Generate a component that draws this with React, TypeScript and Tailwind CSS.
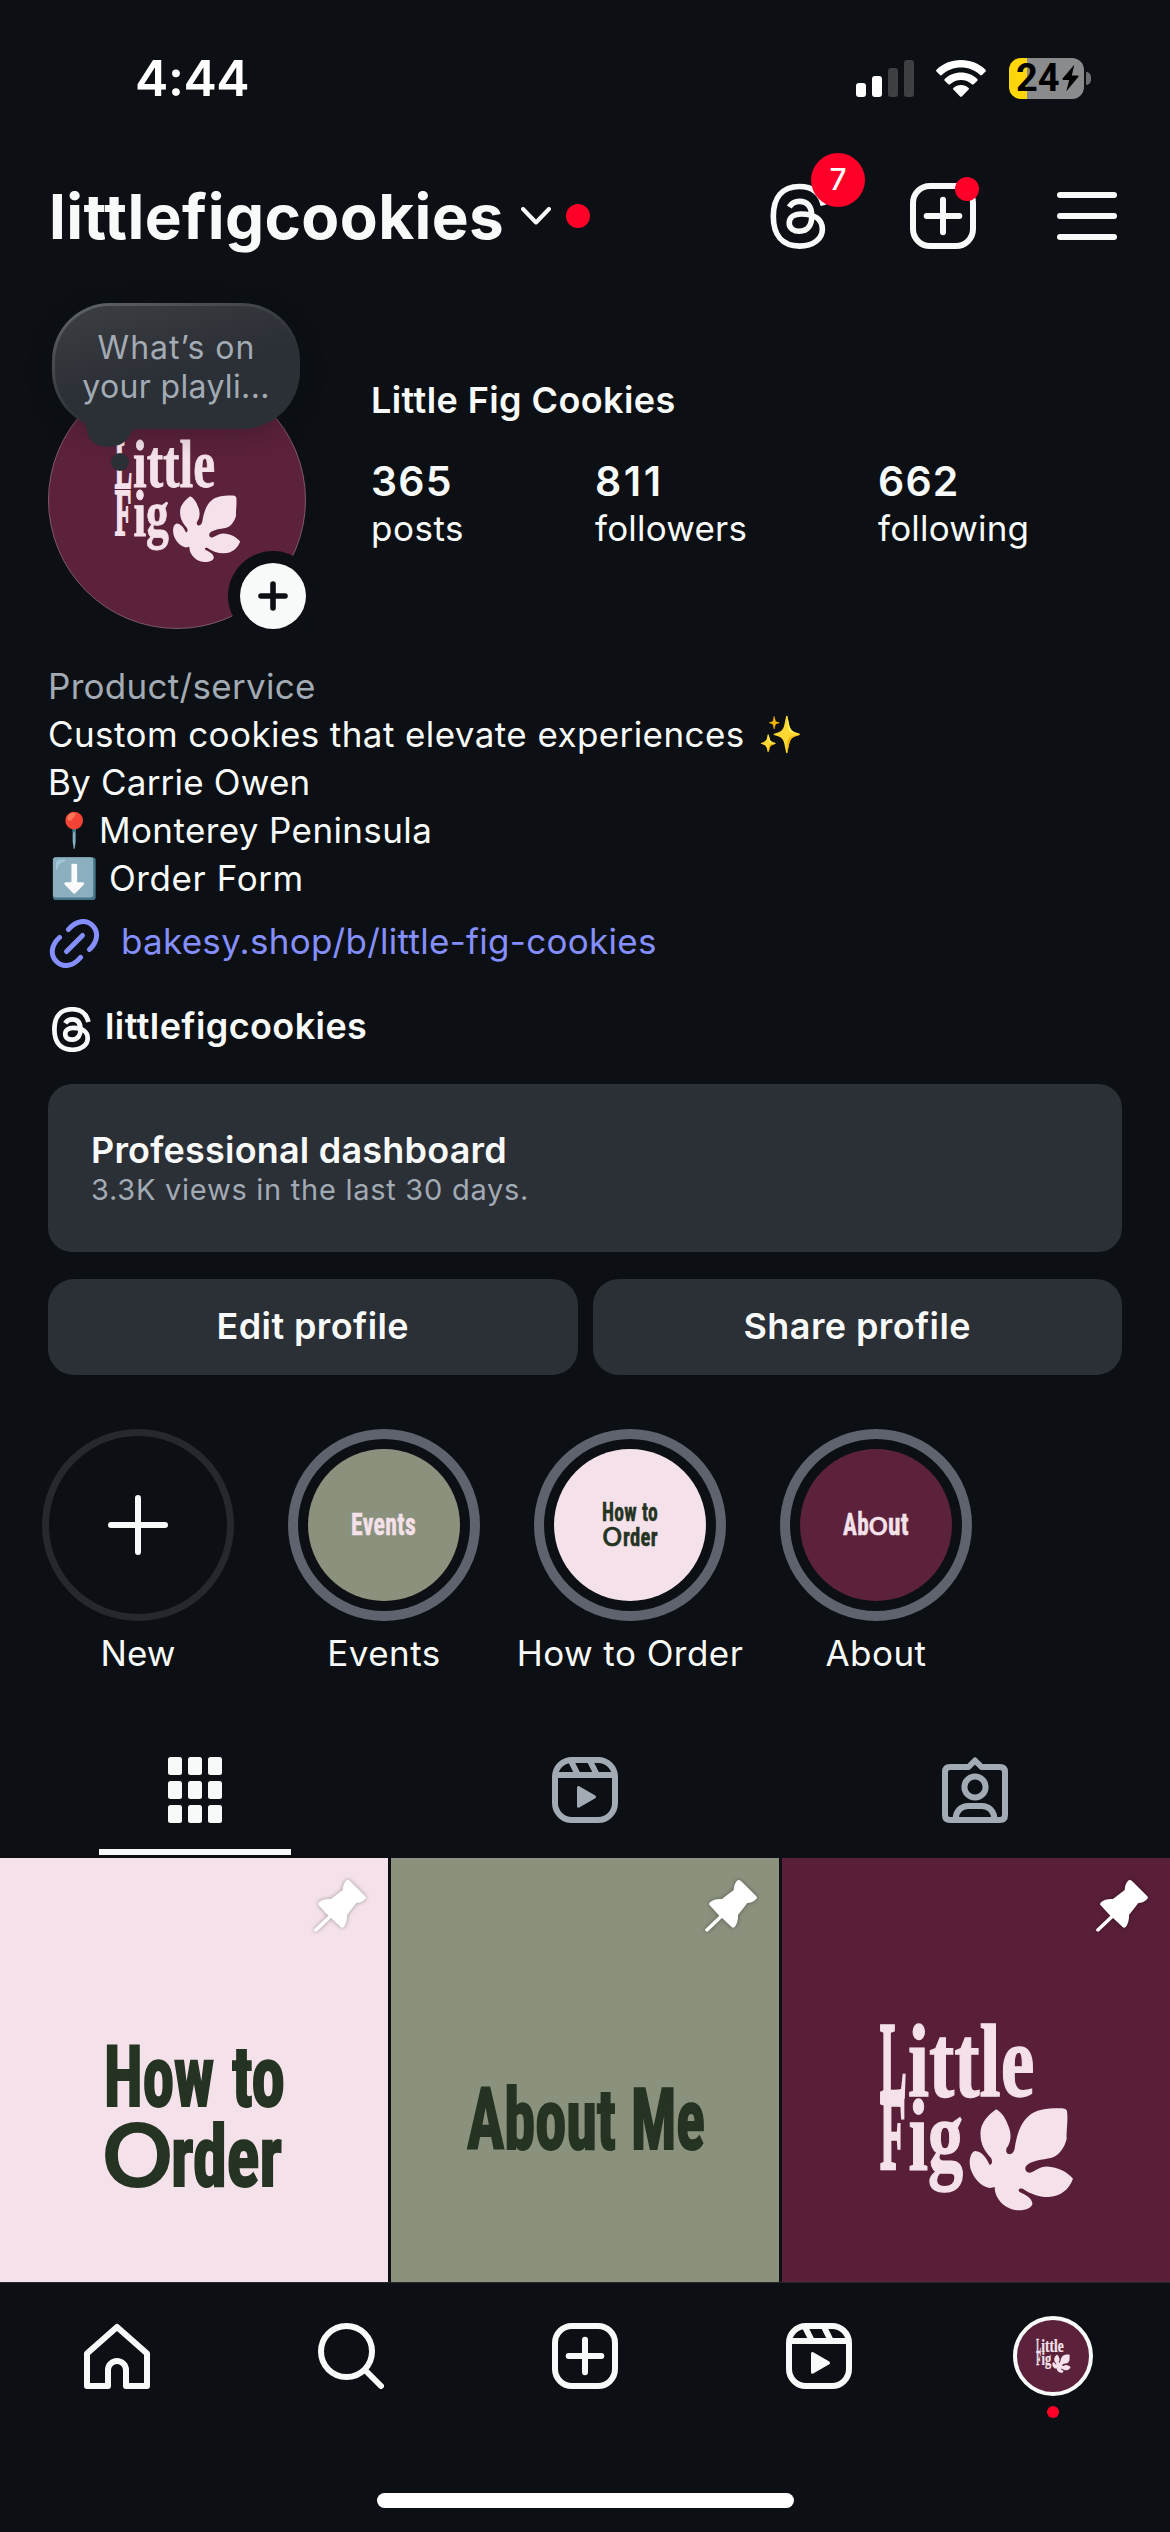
import type { ReactNode } from 'react';

interface IconProps {
  className?: string;
}

interface ArtTextProps {
  x: number;
  y: number;
  size: number;
  width?: number;
  className?: string;
  children: ReactNode;
}

const condensed = "font-['Roboto',sans-serif] font-bold [font-stretch:75%]";

// Lettering stretched to an exact width
const ArtText = ({ x, y, size, width, className = '', children }: ArtTextProps) => (
  <text x={x} y={y} fontSize={size} textLength={width} lengthAdjust="spacingAndGlyphs" className={className}>
    {children}
  </text>
);

const ThreadsIcon = ({ className = '', weight = 17 }: IconProps & { weight?: number }) => (
  <svg viewBox="26 113 172 200" fill="none" stroke="currentColor" strokeWidth={weight} className={className}>
    <path d="M187 180C178 141 152 123 115 123C62 123 36 158 36 213C36 268 62 303 115 303C158 303 184 280 184 252C184 222 160 206 120 206C98 206 84 217 84 233C84 250 98 258 115 258C140 258 152 240 152 213C152 185 140 168 115 168C100 168 91 174 84 185" />
  </svg>
);

const CreateIcon = ({ className = '' }: IconProps) => (
  <svg viewBox="0 0 66 66" fill="none" stroke="currentColor" strokeWidth="6" strokeLinecap="round" className={className}>
    <rect x="3" y="3" width="60" height="60" rx="17" />
    <path d="M33 16.7V49.3M16.7 33H49.3" />
  </svg>
);

const MenuIcon = ({ className = '' }: IconProps) => (
  <svg viewBox="0 0 60 48" fill="none" stroke="currentColor" strokeWidth="6" strokeLinecap="round" className={className}>
    <path d="M3 3H57M3 24H57M3 45H57" />
  </svg>
);

const GridIcon = ({ className = '' }: IconProps) => (
  <svg viewBox="0 0 54 66" fill="currentColor" className={className}>
    {[0, 24, 48].map((y) => [0, 20, 40].map((x) => <rect key={`${x}-${y}`} x={x} y={y} width="14" height="18" rx="2.5" />))}
  </svg>
);

const ReelsIcon = ({ className = '' }: IconProps) => (
  <svg viewBox="0 0 66 66" fill="none" stroke="currentColor" strokeWidth="6" className={className}>
    <rect x="3" y="3" width="60" height="60" rx="17" />
    <path d="M3 18H63M18.5 3L26 18M37.5 3L45 18" />
    <path d="M26.5 30.5V49.2L42.5 39.9Z" fill="currentColor" strokeWidth="3" strokeLinejoin="round" />
  </svg>
);

const TaggedIcon = ({ className = '' }: IconProps) => (
  <svg viewBox="0 0 66 66" fill="none" stroke="currentColor" strokeWidth="6" strokeLinejoin="round" className={className}>
    <path d="M8 10H26.5L33 3.5L39.5 10H58Q63 10 63 15V58Q63 63 58 63H8Q3 63 3 58V15Q3 10 8 10Z" />
    <circle cx="33" cy="30" r="10.6" />
    <path d="M13.7 62C13.7 54.5 19 49 26 49H40C47 49 52.3 54.5 52.3 62" />
  </svg>
);

const HomeIcon = ({ className = '' }: IconProps) => (
  <svg viewBox="0 0 66 66" fill="none" stroke="currentColor" strokeWidth="6" strokeLinejoin="round" className={className}>
    <path d="M3 30.5L33 4L63 30.5V63H42V47A9 9 0 0 0 24 47V63H3Z" />
  </svg>
);

const SearchIcon = ({ className = '' }: IconProps) => (
  <svg viewBox="0 0 66 66" fill="none" stroke="currentColor" strokeWidth="6" strokeLinecap="round" className={className}>
    <circle cx="28.5" cy="28.5" r="25.5" />
    <path d="M47 47L63 63" />
  </svg>
);

const LinkIcon = ({ className = '' }: IconProps) => (
  <svg viewBox="0 0 51 51" fill="none" stroke="currentColor" strokeWidth="5" strokeLinecap="round" className={className}>
    <path d="M19.5 11.5C27 2.5 37 1 43.5 7.5C50 14 48.5 24 40.5 31.5" />
    <path d="M10.5 19.5C2 27 1 37 7.5 43.5C14 50 24 48.5 31.5 39.5" />
    <path d="M17.5 33.5L33.5 17.5" />
  </svg>
);

const PinIcon = ({ className = '' }: IconProps) => (
  <svg viewBox="945 87 162 162" fill="white" className={className}>
    <path d="M1046 91Q1051 88 1056 93L1102 139Q1106 144 1101 148Q1091 159 1075 159L1047 195Q1048 217 1037 231Q1032 236 1028 231L999 204L958 243Q954 247 950 243Q946 240 950 236L991 197L962 166Q958 162 963 157Q974 146 999 147L1034 120Q1035 100 1046 91Z" />
  </svg>
);

const FigLogo = ({ className = '' }: IconProps) => (
  <svg
    viewBox="296 514 586 574"
    fill="#f4e1ea"
    stroke="#f4e1ea"
    className={`overflow-visible font-['Liberation_Serif',serif] font-bold ${className}`}
  >
    <ArtText x={299} y={741} size={324} width={80} className="stroke-[10px]">L</ArtText>
    <ArtText x={383} y={738} size={314} width={380} className="stroke-[4px]">ittle</ArtText>
    <ArtText x={299} y={959} size={316} width={77} className="stroke-[10px]">F</ArtText>
    <ArtText x={385} y={961} size={306} width={164} className="stroke-[4px]">ig</ArtText>
    <path
      stroke="none"
      d="M648 779C625 795 601 820 601 850C600 885 615 905 632 925C638 933 636 948 628 946C618 925 605 906 585 905C568 910 566 940 571 958C580 985 600 1010 628 1016Q640 1014 644 1013C642 1045 672 1080 712 1083C738 1084 757 1075 757 1062C755 1045 735 1036 718 1027C712 1021 718 1016 728 1018C750 1034 780 1044 805 1043C840 1042 868 1020 879 988C865 970 835 952 800 951C780 951 765 965 750 970C738 970 732 960 738 950C755 932 785 932 815 925C840 918 855 890 860 868C858 850 865 810 861 785C858 775 845 776 835 776C800 776 765 780 745 800C722 820 710 855 704 895C702 908 695 916 685 914C675 910 677 897 684 890C695 870 692 845 685 830C678 810 668 790 648 779Z"
    />
  </svg>
);

const StatusBar = () => (
  <div className="flex h-[156px] items-center pr-[79px] pl-[135px]">
    <span className="text-[50px] font-semibold tracking-[-0.4px] text-white">4:44</span>
    <div className="ml-auto flex items-center">
      <div className="flex h-[37px] items-end gap-1.5">
        <div className="h-[14px] w-2.5 rounded-[3px] bg-white" />
        <div className="h-[21px] w-2.5 rounded-[3px] bg-white" />
        <div className="h-[29px] w-2.5 rounded-[3px] bg-[#3d4043]" />
        <div className="h-[37px] w-2.5 rounded-[3px] bg-[#3d4043]" />
      </div>
      <svg viewBox="0 0 50 37" fill="white" className="ml-[22px] h-[37px] w-[50px]">
        <path d="M25 0C34.5 0 43.5 3.6 49.5 9.8q.8.9 0 1.7L46 15q-.9.8-1.8 0C38.9 10 32.3 7.4 25 7.4S11.1 10 5.8 15q-.9.8-1.8 0L.5 11.5q-.8-.8 0-1.7C6.5 3.6 15.5 0 25 0Z" />
        <path d="M25 12.5c6.3 0 12 2.4 16.3 6.4q.9.9 0 1.8l-3.6 3.5q-.9.8-1.8 0c-3-2.7-6.8-4.2-10.9-4.2s-7.9 1.5-10.9 4.2q-.9.8-1.8 0l-3.6-3.5q-.9-.9 0-1.8C13 14.9 18.7 12.5 25 12.5Z" />
        <path d="M25 25c2.9 0 5.6 1.1 7.6 2.9q.9.8 0 1.7L25.9 36.4q-.9.9-1.8 0L17.4 29.6q-.9-.9 0-1.7C19.4 26.1 22.1 25 25 25Z" />
      </svg>
      <div className="ml-[23px] flex h-[41px] w-[75px] items-center rounded-[12px] bg-[linear-gradient(90deg,#ffd60a_18px,#8a8b8d_18px)] pl-[7px] text-black">
        <span className="font-['Roboto'] text-[38px] leading-none font-bold">24</span>
        <svg viewBox="0 0 18 28" fill="currentColor" className="ml-0.5 h-7 w-[17px]">
          <path d="M13 0L.6 14.6Q0 16 1.3 16H7.6L4.6 28L17.4 12.8Q18 11.4 16.6 11.4H10.4Z" />
        </svg>
      </div>
      <div className="ml-0.5 h-[13px] w-[5px] rounded-r-full bg-[#6d6f72]" />
    </div>
  </div>
);

const Header = () => (
  <div className="flex h-[120px] items-center pr-[53px] pl-[49px]">
    <h1 className="mt-px text-[62px] leading-none font-bold tracking-[0.4px]">littlefigcookies</h1>
    <svg viewBox="0 0 30 18" fill="none" stroke="currentColor" strokeWidth="4" strokeLinecap="round" strokeLinejoin="round" className="ml-[17px] h-[18px] w-[30px]">
      <path d="M2 2L15 15.5L28 2" />
    </svg>
    <div className="ml-[15px] size-6 rounded-full bg-[#ff0029]" />
    <div className="ml-auto flex items-center">
      <div className="relative">
        <ThreadsIcon className="h-[66.6px] w-[57px]" />
        <div className="absolute -top-[30px] left-[41px] flex size-[54px] items-center justify-center rounded-full bg-[#ff0029] text-[30px] font-medium text-white">
          7
        </div>
      </div>
      <div className="relative ml-[83px]">
        <CreateIcon className="size-[66px]" />
        <div className="absolute -top-1.5 left-[45px] size-6 rounded-full bg-[#ff0029]" />
      </div>
      <MenuIcon className="ml-[81px] h-12 w-[60px]" />
    </div>
  </div>
);

const Avatar = () => (
  <div className="relative size-[258px] shrink-0 rounded-full border border-[#7d5a68] bg-[#5c213b]">
    <FigLogo className="absolute top-[67px] left-[65px] h-[124px] w-[127px]" />
    <div className="absolute -top-[69px] left-[3px] h-[126px] w-[248px] rounded-[58px] bg-[linear-gradient(160deg,#64676a_0%,#4b4e52_25%,#2b2f36_60%)] p-[3px] shadow-[0_6px_24px_rgba(12,16,20,0.25)]">
      <div className="h-full rounded-[55px] bg-[linear-gradient(165deg,#3b3e41_0%,#2b2f36_55%)] pt-[22px] text-center text-[32px] leading-[39px] text-[#a2aab4]">
        <div className="pl-px tracking-[1px]">What’s on</div>
        <div className="tracking-[0.35px]">your playli...</div>
      </div>
    </div>
    <svg viewBox="0 0 60 57" fill="#2b2f36" className="absolute top-[43px] left-[31px] h-[57px] w-[60px]">
      <path d="M0 0C6 8 6 12 7 16C9 27 17 32 28 32C41 32 48 25 51 18C52 14 56 14 60 14V0Z" />
      <circle cx="40" cy="47" r="9" />
    </svg>
    <div className="absolute top-[179px] left-[179px] flex size-[90px] items-center justify-center rounded-full bg-[#0c1014]">
      <div className="flex size-[66px] items-center justify-center rounded-full bg-[#f8faf9]">
        <svg viewBox="0 0 30 30" stroke="#0c1014" strokeWidth="5.6" strokeLinecap="round" className="size-[30px]">
          <path d="M15 3V27M3 15H27" />
        </svg>
      </div>
    </div>
  </div>
);

const stats = [
  { value: '365', label: 'posts', valueClass: 'tracking-[1.2px]', labelClass: 'tracking-[0.5px]' },
  { value: '811', label: 'followers', valueClass: 'tracking-[2.6px]', labelClass: 'tracking-[0.2px]' },
  { value: '662', label: 'following', valueClass: 'tracking-[1.2px]', labelClass: 'tracking-[0.2px]' },
];

const ProfileSummary = () => (
  <div className="mt-[95px] flex gap-[65px] px-12">
    <Avatar />
    <div className="pt-[5px]">
      <div className="text-[36px] leading-[48px] font-semibold tracking-[0.4px]">Little Fig Cookies</div>
      <div className="mt-[34px] grid grid-cols-[224px_283px_auto]">
        {stats.map((stat) => (
          <div key={stat.label}>
            <div className={`text-[41px] leading-[46px] font-semibold ${stat.valueClass}`}>{stat.value}</div>
            <div className={`text-[35px] leading-[48px] ${stat.labelClass}`}>{stat.label}</div>
          </div>
        ))}
      </div>
    </div>
  </div>
);

const Bio = () => (
  <div className="mt-[33px] px-12 text-[35px] leading-[48px] tracking-[0.41px]">
    <div className="h-12 tracking-[0.3px] text-[#a2aab4]">Product/service</div>
    <div className="flex h-12 items-center">
      Custom cookies that elevate experiences
      <span className="ml-[13px] text-[36px] tracking-normal">✨</span>
    </div>
    <div className="h-12 tracking-[0.2px]">By Carrie Owen</div>
    <div className="flex h-12 items-center tracking-[0.38px]">
      <span className="w-[51px] text-center text-[34px] tracking-normal">📍</span>
      Monterey Peninsula
    </div>
    <div className="flex h-12 items-center">
      <span className="mr-[9px] flex w-[52px] justify-center text-[39px] tracking-normal">⬇️</span>
      <span className="tracking-[0.6px]">Order Form</span>
    </div>
    <div className="mt-[15px] flex h-[52px] items-center pl-px text-[#858fff]">
      <LinkIcon className="size-[51px]" />
      <span className="-mt-1 ml-[21px] tracking-[0.28px]">bakesy.shop/b/little-fig-cookies</span>
    </div>
    <div className="mt-9 flex h-12 items-center pl-1">
      <ThreadsIcon className="h-[45px] w-[39px]" weight={21} />
      <span className="-mt-[6px] ml-[14px] text-[36px] font-semibold tracking-[0.4px]">littlefigcookies</span>
    </div>
  </div>
);

const Actions = () => (
  <div className="mt-[31px] px-12">
    <div className="h-[168px] rounded-[24px] bg-[#2b2f36] pt-[45px] pl-[43px]">
      <div className="text-[36px] leading-[43px] font-semibold tracking-[0.2px]">Professional dashboard</div>
      <div className="text-[29px] leading-[36px] tracking-[0.73px] text-[#a2aab4]">3.3K views in the last 30 days.</div>
    </div>
    <div className="mt-[27px] grid grid-cols-2 gap-[15px] text-[36px] font-semibold tracking-[0.4px]">
      <button className="h-24 rounded-[26px] bg-[#2b2f36] pb-[3px]">Edit profile</button>
      <button className="h-24 rounded-[26px] bg-[#2b2f36] pb-[3px]">Share profile</button>
    </div>
  </div>
);

const highlights = [
  {
    label: 'Events',
    cover: 'bg-[#8a917d]',
    art: (
      <g fill="#f4e1ea" stroke="#f4e1ea" strokeWidth="0.5" className={condensed}>
        <ArtText x={43} y={86} size={32} width={65}>Events</ArtText>
      </g>
    ),
  },
  {
    label: 'How to Order',
    cover: 'bg-[#f4e1ea]',
    art: (
      <g fill="#253322" stroke="#253322" strokeWidth="0.5" className={condensed}>
        <ArtText x={48} y={72} size={26} width={56}>How to</ArtText>
        <ArtText x={48} y={97} size={25} width={21} className="font-['Inter'] font-medium [font-stretch:100%]">O</ArtText>
        <ArtText x={69} y={97} size={26} width={35}>rder</ArtText>
      </g>
    ),
  },
  {
    label: 'About',
    cover: 'bg-[#5c213b]',
    art: (
      <g fill="#f4e1ea" stroke="#f4e1ea" strokeWidth="0.5" className={condensed}>
        <ArtText x={43} y={86} size={32} width={26}>Ab</ArtText>
        <ArtText x={68} y={86} size={32} width={21} className="font-['Inter'] font-normal [font-stretch:100%]">o</ArtText>
        <ArtText x={88} y={86} size={32} width={21}>ut</ArtText>
      </g>
    ),
  },
];

const Highlights = () => (
  <div className="mt-[54px] flex pl-[15px] text-[35px] leading-[44px] tracking-[0.45px]">
    <div className="flex w-[246px] flex-col items-center">
      <div className="flex size-48 items-center justify-center rounded-full border-[7px] border-[#25282c]">
        <svg viewBox="0 0 60 60" stroke="currentColor" strokeWidth="6" strokeLinecap="round" className="size-[60px]">
          <path d="M30 3V57M3 30H57" />
        </svg>
      </div>
      <div className="mt-2.5 tracking-normal">New</div>
    </div>
    {highlights.map((item) => (
      <div key={item.label} className="flex w-[246px] flex-col items-center">
        <div className="size-48 rounded-full border-[10px] border-[#5e636e] p-2.5">
          <svg viewBox="0 0 152 152" className={`size-[152px] rounded-full ${item.cover}`}>
            {item.art}
          </svg>
        </div>
        <div className="mt-2.5 whitespace-nowrap">{item.label}</div>
      </div>
    ))}
  </div>
);

const Tabs = () => (
  <div className="mt-[50px] grid h-[133px] grid-cols-3 justify-items-center pt-8 text-[#a2aab4]">
    <div className="flex flex-col items-center text-[#f8faf9]">
      <GridIcon className="h-[66px] w-[54px]" />
      <div className="mt-[26px] h-1.5 w-48 bg-[#f8faf9]" />
    </div>
    <ReelsIcon className="size-[66px]" />
    <TaggedIcon className="size-[66px]" />
  </div>
);

const Tile = ({ className, children }: { className: string; children: ReactNode }) => (
  <div className={`relative h-[424px] overflow-hidden ${className}`}>
    {children}
    <PinIcon className="absolute top-[21px] right-[21px] size-[54px] drop-shadow-[0_0_2px_rgba(0,0,0,0.35)]" />
  </div>
);

const PostGrid = () => (
  <div className="grid grid-cols-3 gap-[3px]">
    <Tile className="bg-[#f4e1ea]">
      <svg viewBox="0 0 388 424" fill="#253322" stroke="#253322" strokeWidth="2" className={`h-[424px] w-[388px] ${condensed}`}>
        <ArtText x={104} y={247.5} size={85} width={110}>How</ArtText>
        <ArtText x={232} y={247.5} size={85} width={53}>to</ArtText>
        <ArtText x={101} y={328} size={85} width={73} className="font-['Inter'] font-medium [font-stretch:100%]">O</ArtText>
        <ArtText x={171} y={328} size={85} width={111}>rder</ArtText>
      </svg>
    </Tile>
    <Tile className="bg-[#8a917d]">
      <svg viewBox="0 0 388 424" fill="#253322" stroke="#253322" strokeWidth="2" className={`h-[424px] w-[388px] ${condensed}`}>
        <ArtText x={76} y={290.5} size={86} width={149}>About</ArtText>
        <ArtText x={240} y={290.5} size={86} width={74}>Me</ArtText>
      </svg>
    </Tile>
    <Tile className="bg-[#591f38]">
      <FigLogo className="mt-[163px] ml-[97px] h-[191px] w-[195px]" />
    </Tile>
  </div>
);

const BottomNav = () => (
  <div className="border-t border-[#25282d] pt-[33px] pb-6">
    <div className="grid grid-cols-5 justify-items-center">
      <HomeIcon className="mt-[7px] size-[66px]" />
      <SearchIcon className="mt-[7px] size-[66px]" />
      <CreateIcon className="mt-[7px] size-[66px]" />
      <ReelsIcon className="mt-[7px] size-[66px]" />
      <div className="flex flex-col items-center">
        <div className="flex size-20 items-center justify-center rounded-full border-4 border-[#f8faf9] bg-[#5c213b]">
          <FigLogo className="h-[34px] w-[35px]" />
        </div>
        <div className="mt-2.5 size-3 rounded-full bg-[#ff0029]" />
      </div>
    </div>
    <div className="mx-auto mt-[75px] h-[15px] w-[417px] rounded-full bg-white" />
  </div>
);

export default function App() {
  return (
    <div className="h-[2532px] w-[1170px] overflow-hidden bg-[#0c1014] font-['Inter',sans-serif] text-[#f8faf9]">
      <StatusBar />
      <Header />
      <ProfileSummary />
      <Bio />
      <Actions />
      <Highlights />
      <Tabs />
      <PostGrid />
      <BottomNav />
    </div>
  );
}
